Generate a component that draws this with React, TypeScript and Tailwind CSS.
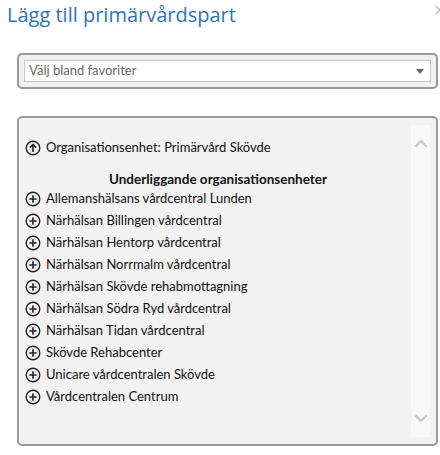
import React from "react";

const units = [
  "Allemanshälsans vårdcentral Lunden",
  "Närhälsan Billingen vårdcentral",
  "Närhälsan Hentorp vårdcentral",
  "Närhälsan Norrmalm vårdcentral",
  "Närhälsan Skövde rehabmottagning",
  "Närhälsan Södra Ryd vårdcentral",
  "Närhälsan Tidan vårdcentral",
  "Skövde Rehabcenter",
  "Unicare vårdcentralen Skövde",
  "Vårdcentralen Centrum",
];

const CircleIcon = ({ type }: { type: "up" | "plus" }) => (
  <svg width="16" height="16" viewBox="0 0 16 16" className="shrink-0">
    <circle cx="8" cy="8" r="6.8" fill="none" stroke="#222" strokeWidth="1.4" />
    {type === "plus" ? (
      <path d="M8 4.3v7.4M4.3 8h7.4" stroke="#222" strokeWidth="1.6" />
    ) : (
      <path d="M8 12V4.6M4.9 7.6L8 4.5l3.1 3.1" stroke="#222" strokeWidth="1.6" fill="none" />
    )}
  </svg>
);

const Chevron = ({ dir }: { dir: "up" | "down" }) => (
  <svg width="14" height="9" viewBox="0 0 14 9">
    <path
      d={dir === "up" ? "M1.5 7.5L7 2l5.5 5.5" : "M1.5 1.5L7 7l5.5-5.5"}
      stroke="#c4c4c4"
      strokeWidth="2"
      fill="none"
    />
  </svg>
);

const App = () => {
  return (
    <div
      className="w-[440px] h-[455px] bg-white relative overflow-hidden"
      style={{ fontFamily: "Lato, 'Open Sans', sans-serif" }}
    >
      <svg width="10" height="10" viewBox="0 0 10 10" className="absolute left-[435px] top-[5px]">
        <path d="M1 1l8 8M9 1L1 9" stroke="#b8b8b8" strokeWidth="1.4" />
      </svg>
      <h1
        className="pl-[7px] pt-[0px] text-[20px] leading-[29px] text-[#2e74b8] font-normal"
        style={{ fontFamily: "'Open Sans', sans-serif" }}
      >
        Lägg till primärvårdspart
      </h1>

      <div className="ml-[17px] mt-[24px] w-[421px] h-[36px] rounded-[5px] border-2 border-[#9a9a9a] bg-[#f0f0f0] px-[5px] pt-[5px]">
        <div className="h-[22px] bg-white border border-[#c8c8c8] flex items-center justify-between pl-[4px] pr-[6px]">
          <span className="text-[13px] text-[#666]">Välj bland favoriter</span>
          <svg width="8" height="5" viewBox="0 0 8 5">
            <path d="M0 0h8L4 5z" fill="#666" />
          </svg>
        </div>
      </div>

      <div className="ml-[17px] mt-[27px] w-[421px] h-[330px] rounded-[5px] border-2 border-[#9a9a9a] bg-[#f2f2f2] flex">
        <div className="flex-1 pl-[6px] pt-[20px] text-[13px] text-[#111]">
          <div className="flex items-center gap-[5px] h-[20px]">
            <CircleIcon type="up" />
            <span>Organisationsenhet: Primärvård Skövde</span>
          </div>
          <div className="text-center font-bold text-[13.5px] mt-[12px] h-[18px] leading-[18px]">
            Underliggande organisationsenheter
          </div>
          {units.map((u) => (
            <div key={u} className="flex items-center gap-[5px] h-[22px]">
              <CircleIcon type="plus" />
              <span>{u}</span>
            </div>
          ))}
        </div>
        <div className="w-[19px] mr-[6px] my-[7px] bg-[#f8f8f8] flex flex-col items-center justify-between py-[14px]">
          <Chevron dir="up" />
          <Chevron dir="down" />
        </div>
      </div>
    </div>
  );
};

export default App;
